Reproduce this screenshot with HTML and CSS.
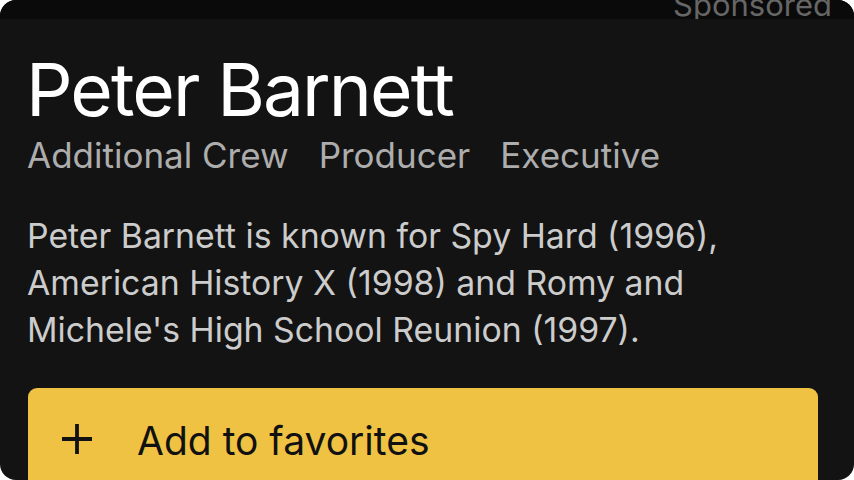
FILE: index.html
```html
<!DOCTYPE html>
<html>
<head>
<meta charset="utf-8">
<link rel="stylesheet" href="styles.css">
</head>
<body>
<div class="phone">
  <div class="topbar"><span class="sponsored">Sponsored</span></div>
  <div class="content">
    <h1 class="name">Peter Barnett</h1>
    <div class="roles">
      <span>Additional Crew</span>
      <span>Producer</span>
      <span>Executive</span>
    </div>
    <p class="bio">Peter Barnett is known for Spy Hard (1996), American History X (1998) and Romy and Michele's High School Reunion (1997).</p>
    <button class="fav">
      <svg class="plus" width="30" height="32" viewBox="0 0 30 32"><path d="M15 1v30M0 16h30" stroke="#111" stroke-width="3.8" fill="none"/></svg>
      <span class="fav-label">Add to favorites</span>
    </button>
  </div>
</div>
</body>
</html>
```
FILE: styles.css
```css
html, body {
  margin: 0;
  padding: 0;
  background: #ffffff;
}
body {
  width: 854px;
  height: 480px;
  overflow: hidden;
  font-family: Inter, "Noto Sans", sans-serif;
}
.phone {
  width: 854px;
  height: 480px;
  background: #131313;
  border-radius: 16px;
  overflow: hidden;
  display: flex;
  flex-direction: column;
}
.topbar {
  flex: none;
  height: 19px;
  background: #0a0a0a;
  display: flex;
  justify-content: flex-end;
  align-items: flex-end;
  padding-right: 22px;
  overflow: hidden;
}
.sponsored {
  color: #666666;
  font-size: 31px;
  line-height: 31px;
  margin-bottom: -1px;
}
.content {
  padding: 0 36px 0 27px;
  display: flex;
  flex-direction: column;
}
.name {
  margin: 31px 0 0 -1px;
  font-size: 73px;
  font-weight: 400;
  color: #ffffff;
  line-height: 80px;
  letter-spacing: -1.9px;
}
.roles {
  display: flex;
  gap: 30px;
  color: #adadad;
  font-size: 35px;
  line-height: 40px;
  margin-top: 5px;
}
.bio {
  margin: 37px 0 0 0;
  color: #cccccc;
  font-size: 33.8px;
  line-height: 47px;
}
.fav {
  flex: none;
  margin: 35px 0 0 1px;
  width: 790px;
  height: 120px;
  background: #efc243;
  border: none;
  border-radius: 9px;
  display: flex;
  align-items: center;
  align-self: flex-start;
  padding: 33px 0 0 34px;
  gap: 45px;
  font-family: inherit;
  color: #111111;
  font-size: 39px;
  line-height: 39px;
}
.fav .plus {
  flex: none;
  align-self: flex-start;
  margin-top: 2px;
}
.fav-label {
  align-self: flex-start;
}
```
